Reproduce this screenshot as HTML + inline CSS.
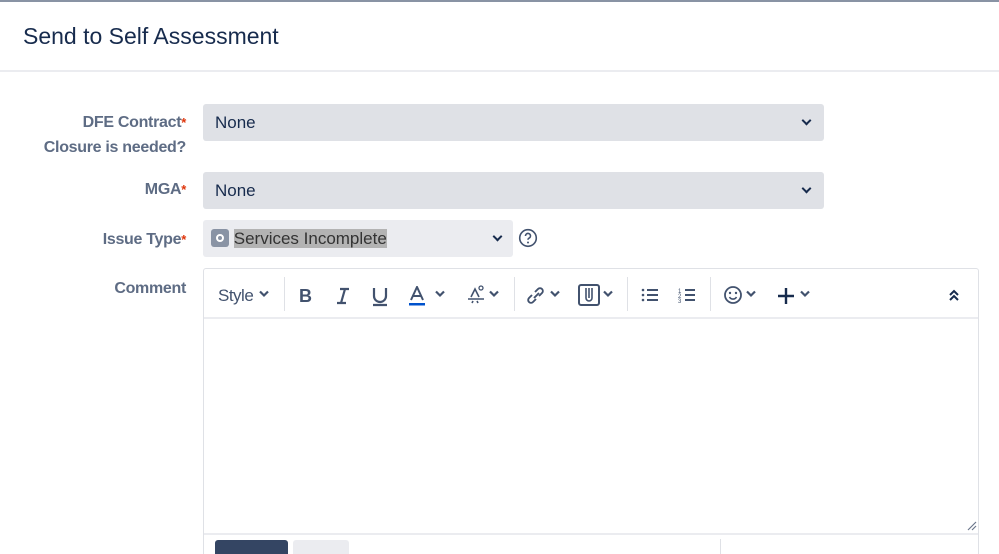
<!DOCTYPE html>
<html><head><style>
*{box-sizing:border-box;margin:0;padding:0}
html,body{width:999px;height:554px;overflow:hidden}
body{background:#fff;font-family:"Liberation Sans",sans-serif;color:#172b4d;position:relative}
.topline{position:absolute;left:0;top:0;width:999px;height:2px;background:#8993a4}
h1{position:absolute;left:23px;top:23px;font-size:23px;font-weight:400;color:#172b4d}
.hr{position:absolute;left:0;top:70px;width:999px;height:2px;background:#ebecf0}
.lbl{position:absolute;right:813px;font-size:16px;color:#5e6c84;text-align:right;line-height:25px;font-weight:700;letter-spacing:-0.3px}
.lbl b{color:#de350b;font-weight:700;font-size:13px;vertical-align:top}
.sel{position:absolute;left:203px;height:37px;background:#dfe1e6;border-radius:3px;font-size:17px;color:#172b4d;padding-left:12px;line-height:37px}
.chev{position:absolute;top:50%;margin-top:-6px;width:7px;height:7px;border-right:2px solid #172b4d;border-bottom:2px solid #172b4d;transform:rotate(45deg)}
.ed{position:absolute;left:203px;top:268px;width:776px;height:300px;border:1px solid #dfe1e6;border-radius:3px}
.tb{position:absolute;left:0;top:0;width:100%;height:50px;border-bottom:2px solid #ebecf0}
.sep{position:absolute;top:8px;width:1px;height:34px;background:#dfe1e6}
svg{position:absolute}
</style></head><body>
<div class="topline"></div>
<h1>Send to Self Assessment</h1>
<div class="hr"></div>
<div class="lbl" style="top:110px">DFE Contract<b>*</b><br>Closure is needed?</div>
<div class="sel" style="top:104px;width:621px">None<span class="chev" style="right:14px"></span></div>
<div class="lbl" style="top:177px">MGA<b>*</b></div>
<div class="sel" style="top:172px;width:621px">None<span class="chev" style="right:14px"></span></div>
<div class="lbl" style="top:227px">Issue Type<b>*</b></div>
<div class="sel" style="top:220px;width:310px;background:#ebecf0;padding-left:8px"><span style="display:inline-block;width:18px;height:18px;background:#8993a4;border-radius:3px;vertical-align:-3px;position:relative"><span style="position:absolute;left:5px;top:5px;width:8px;height:8px;border:2px solid #fff;border-radius:50%"></span></span> <span style="background:#b3b3b3;color:#333">Services Incomplete</span><span class="chev" style="right:12px"></span></div>
<svg style="left:518px;top:228px" width="20" height="20" viewBox="0 0 20 20"><circle cx="10" cy="10" r="8.3" fill="none" stroke="#42526e" stroke-width="1.6"/><path d="M7.5 8a2.5 2.5 0 1 1 3.5 2.2c-.8.4-1 .8-1 1.6" fill="none" stroke="#42526e" stroke-width="1.6"/><circle cx="10" cy="14.5" r="1" fill="#42526e"/></svg>
<div class="lbl" style="top:276px">Comment</div>
<div class="ed">
<div class="tb">
<span style="position:absolute;left:14px;top:17px;font-size:17px;color:#42526e;letter-spacing:-0.5px">Style</span>
<svg style="left:55px;top:21px" width="10" height="8"><path d="M1 1.5l4 4 4-4" fill="none" stroke="#42526e" stroke-width="2.2"/></svg>
<div class="sep" style="left:80px"></div>
<span style="position:absolute;left:95px;top:17px;font-size:18px;font-weight:700;color:#42526e">B</span>
<svg style="left:131px;top:18px" width="16" height="18"><path d="M5 2h9M2 16h9M10 2L6 16" fill="none" stroke="#42526e" stroke-width="2.2"/></svg>
<svg style="left:167px;top:18px" width="18" height="20"><path d="M3 1v8a6 6 0 0 0 12 0V1M2 18h14" fill="none" stroke="#42526e" stroke-width="2.2"/></svg>
<svg style="left:204px;top:17px" width="18" height="20"><path d="M3 14L9 1l6 13M5.5 10h7" fill="none" stroke="#42526e" stroke-width="2"/><rect x="1" y="17" width="16" height="2.5" fill="#0052cc"/></svg>
<svg style="left:231px;top:21px" width="10" height="8"><path d="M1 1.5l4 4 4-4" fill="none" stroke="#42526e" stroke-width="2.2"/></svg>
<svg style="left:262px;top:16px" width="22" height="20"><path d="M5 12l4-8 4 8M2 14h16M6 18l1-2M12 18l-1-2" fill="none" stroke="#42526e" stroke-width="1.6"/><circle cx="15" cy="3" r="2" fill="none" stroke="#42526e" stroke-width="1.3"/></svg>
<svg style="left:285px;top:21px" width="10" height="8"><path d="M1 1.5l4 4 4-4" fill="none" stroke="#42526e" stroke-width="2.2"/></svg>
<div class="sep" style="left:310px"></div>
<svg style="left:322px;top:17px" width="20" height="18"><path d="M8 12l5-5M6 9l-3 3a2.8 2.8 0 0 0 4 4l3-3M13 10l3-3a2.8 2.8 0 0 0-4-4L9 6" fill="none" stroke="#42526e" stroke-width="1.9"/></svg>
<svg style="left:346px;top:21px" width="10" height="8"><path d="M1 1.5l4 4 4-4" fill="none" stroke="#42526e" stroke-width="2.2"/></svg>
<svg style="left:374px;top:15px" width="22" height="22"><rect x="1" y="1" width="20" height="20" rx="2" fill="none" stroke="#42526e" stroke-width="2"/><path d="M8 4v10a3 3 0 0 0 6 0V4M11 4v10" fill="none" stroke="#42526e" stroke-width="1.6"/></svg>
<svg style="left:399px;top:21px" width="10" height="8"><path d="M1 1.5l4 4 4-4" fill="none" stroke="#42526e" stroke-width="2.2"/></svg>
<div class="sep" style="left:423px"></div>
<svg style="left:437px;top:19px" width="18" height="14"><g fill="#42526e"><circle cx="2" cy="2" r="1.3"/><circle cx="2" cy="7" r="1.3"/><circle cx="2" cy="12" r="1.3"/><rect x="6" y="1" width="11" height="2"/><rect x="6" y="6" width="11" height="2"/><rect x="6" y="11" width="11" height="2"/></g></svg>
<svg style="left:474px;top:18px" width="18" height="16"><g fill="#42526e"><rect x="7" y="2" width="10" height="2"/><rect x="7" y="7" width="10" height="2"/><rect x="7" y="12" width="10" height="2"/></g><text x="0" y="6" font-size="6" fill="#42526e" font-family="Liberation Sans">1</text><text x="0" y="11" font-size="6" fill="#42526e" font-family="Liberation Sans">2</text><text x="0" y="16" font-size="6" fill="#42526e" font-family="Liberation Sans">3</text></svg>
<div class="sep" style="left:506px"></div>
<svg style="left:519px;top:16px" width="20" height="20"><circle cx="10" cy="10" r="8" fill="none" stroke="#42526e" stroke-width="1.8"/><circle cx="7" cy="8" r="1.2" fill="#42526e"/><circle cx="13" cy="8" r="1.2" fill="#42526e"/><path d="M6.5 12a4 4 0 0 0 7 0" fill="none" stroke="#42526e" stroke-width="1.6"/></svg>
<svg style="left:542px;top:21px" width="10" height="8"><path d="M1 1.5l4 4 4-4" fill="none" stroke="#42526e" stroke-width="2.2"/></svg>
<svg style="left:573px;top:18px" width="18" height="18"><path d="M9 1v16M1 9h16" stroke="#172b4d" stroke-width="2.4"/></svg>
<svg style="left:596px;top:21px" width="10" height="8"><path d="M1 1.5l4 4 4-4" fill="none" stroke="#42526e" stroke-width="2.2"/></svg>
<svg style="left:744px;top:20px" width="12" height="12"><path d="M2 6l4-4 4 4M2 11l4-4 4 4" fill="none" stroke="#172b4d" stroke-width="2"/></svg>
</div>
<svg style="left:763px;top:252px" width="10" height="10"><path d="M1 9L9 1M5 9L9 5" stroke="#6b778c" stroke-width="1.2"/></svg>
<div style="position:absolute;left:0;top:264px;width:100%;height:2px;background:#ebecf0"></div>
<div style="position:absolute;left:11px;top:271px;width:73px;height:30px;background:#344563;border-radius:3px"></div>
<div style="position:absolute;left:89px;top:271px;width:56px;height:30px;background:#ebecf0;border-radius:3px"></div>
<div style="position:absolute;left:516px;top:270px;width:1px;height:30px;background:#dfe1e6"></div>
</div>
</body></html>
